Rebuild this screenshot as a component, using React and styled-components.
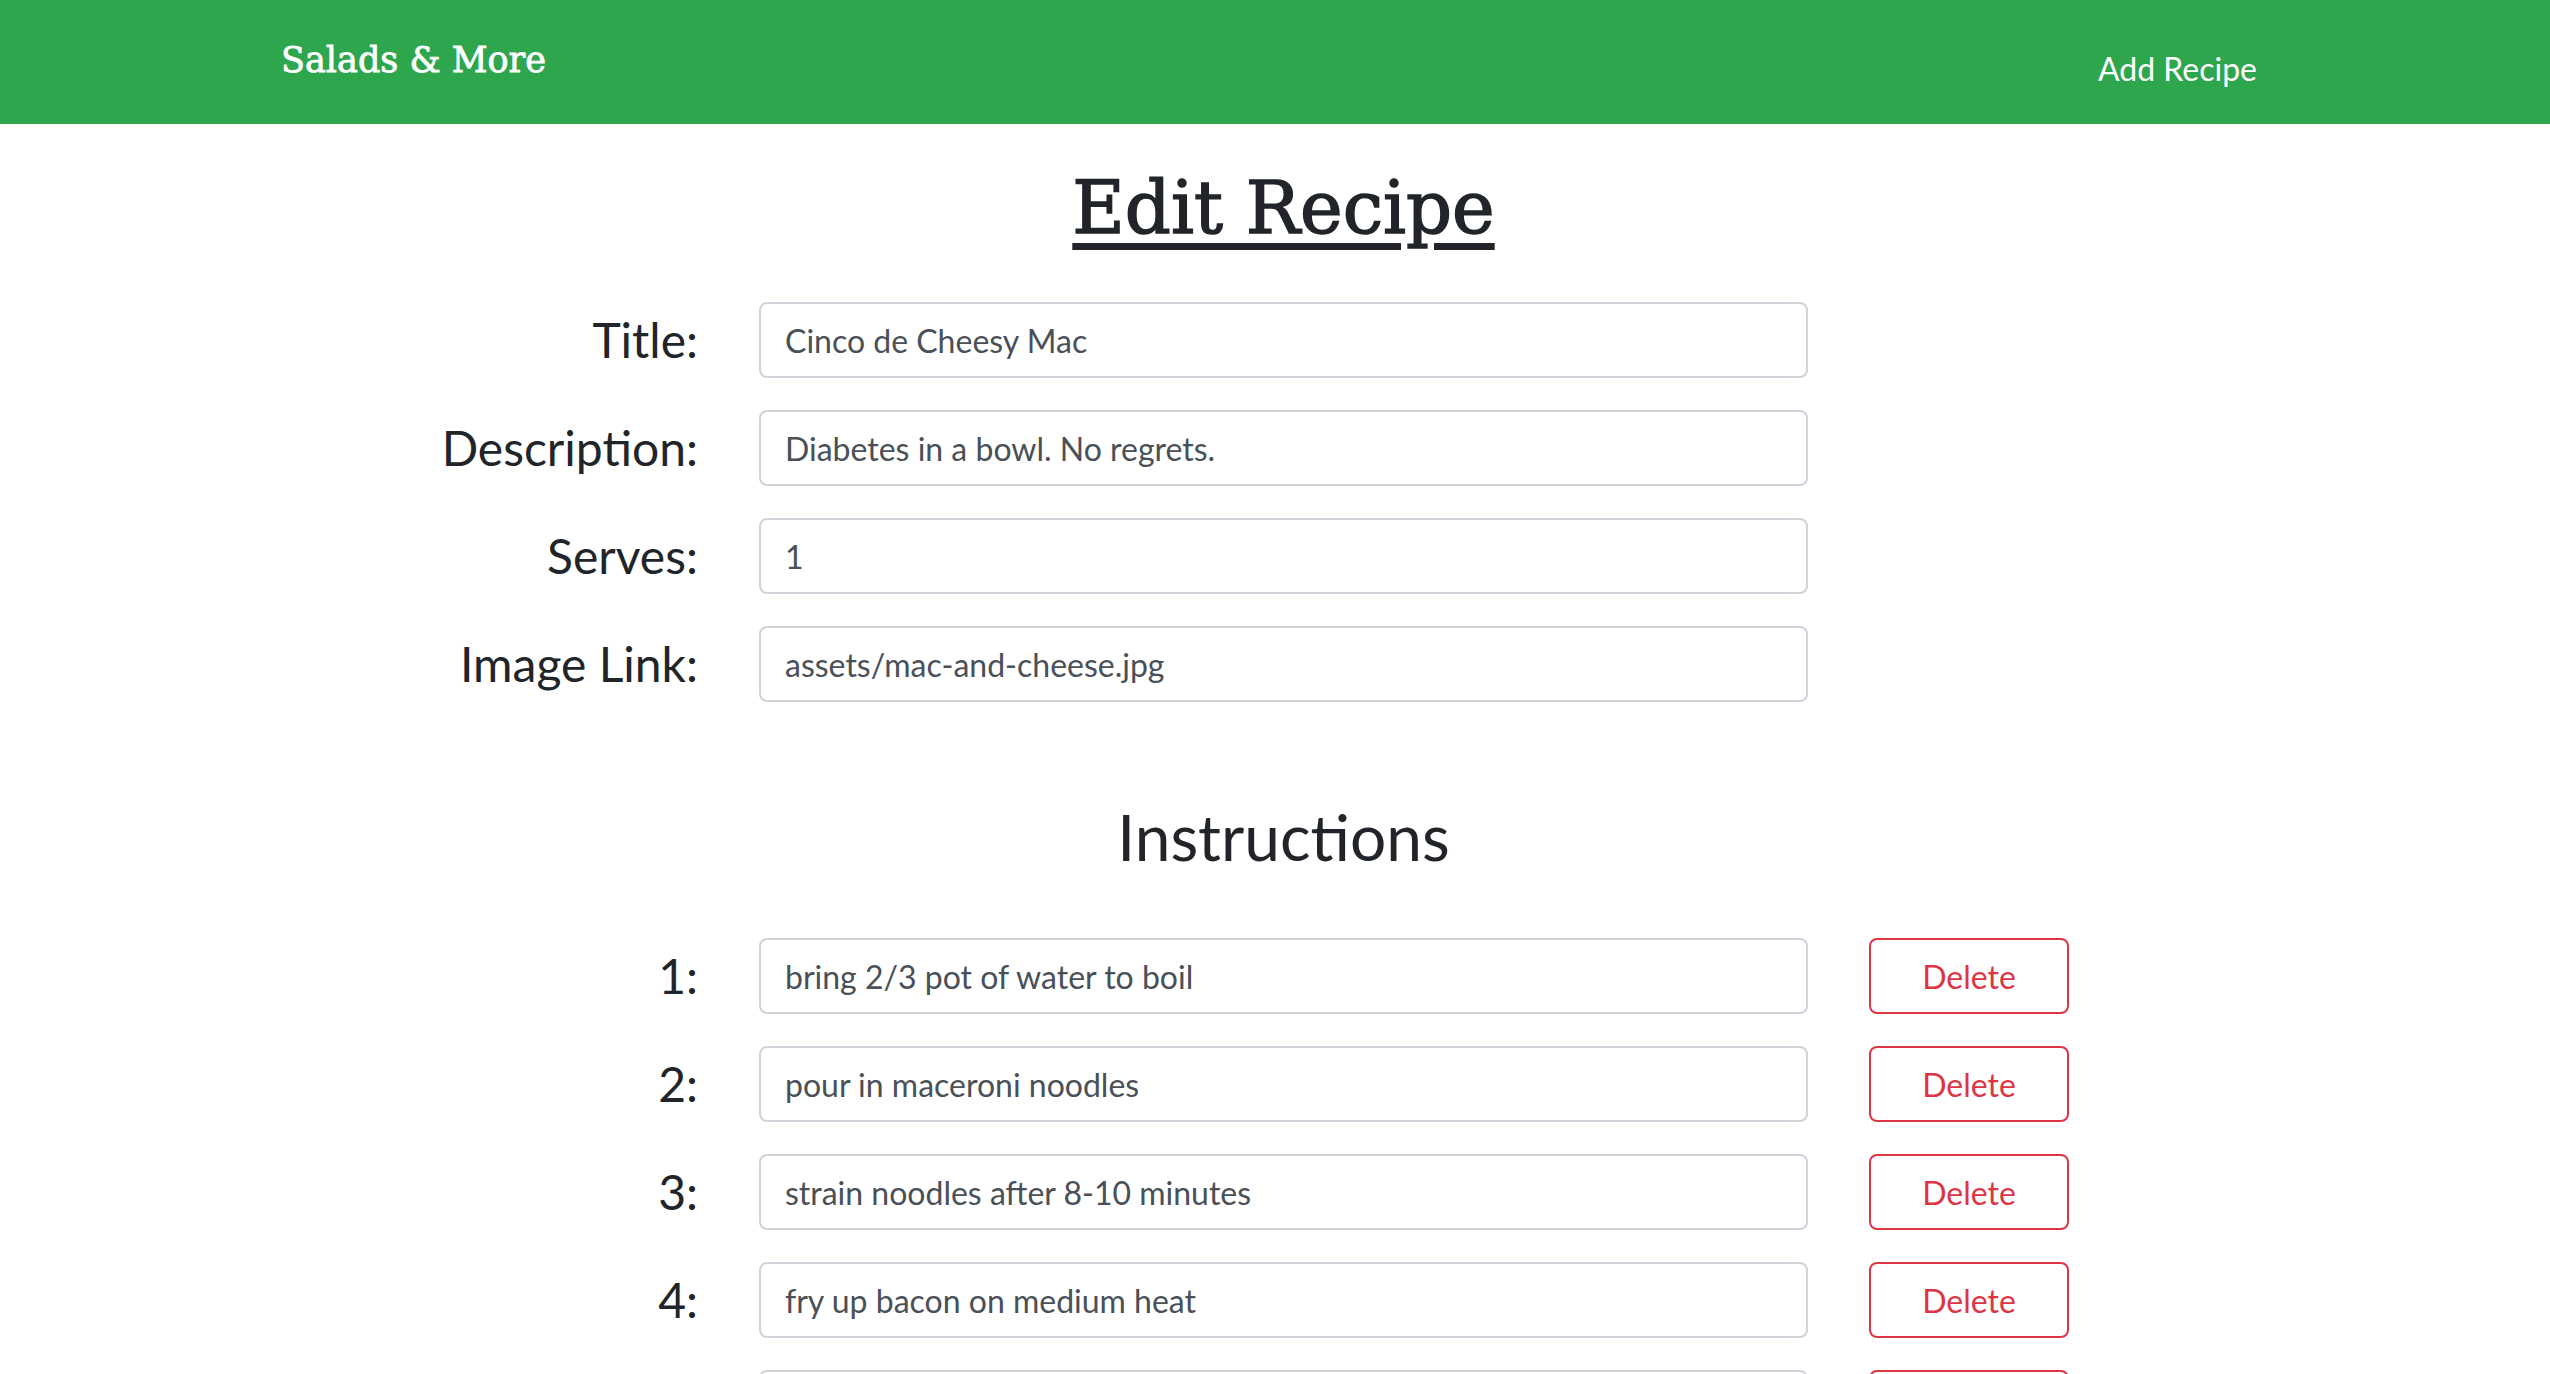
import React from "react";
import styled, { createGlobalStyle } from "styled-components";

const GlobalStyle = createGlobalStyle`
  html, body {
    margin: 0;
    padding: 0;
    background: #ffffff;
  }
  body {
    font-family: Lato, "Noto Sans", "Liberation Sans", sans-serif;
    color: #212529;
  }
  * { box-sizing: border-box; }
`;

const NavBar = styled.nav`
  height: 124px;
  background: #2ea64d;
  display: flex;
  align-items: center;
  justify-content: space-between;
  padding: 0 293px 0 281px;
`;

const Brand = styled.a`
  font-family: "DejaVu Serif", "Liberation Serif", serif;
  font-weight: normal;
  font-size: 35px;
  -webkit-text-stroke: 0.8px #ffffff;
  color: #ffffff;
  text-decoration: none;
  margin-top: -4px;
`;

const NavLink = styled.a`
  font-family: Lato, sans-serif;
  font-size: 32px;
  color: #ffffff;
  text-decoration: none;
  margin-top: 12px;
`;

const Main = styled.main`
  display: flex;
  flex-direction: column;
`;

const Grid = styled.div`
  display: grid;
  grid-template-columns: 698px 1049px 200px;
  column-gap: 61px;
  row-gap: 32px;
  align-items: center;
`;

const HeadingRow = styled.div`
  display: grid;
  grid-template-columns: 698px 1049px 200px;
  column-gap: 61px;
  margin: ${(p) => p.$margin};
`;

const PageTitle = styled.h1`
  grid-column: 2;
  justify-self: center;
  margin: 0;
  font-family: "DejaVu Serif", "Liberation Serif", serif;
  font-weight: normal;
  font-size: 72px;
  line-height: 96px;
  color: #212529;
  -webkit-text-stroke: 1.5px #212529;
  white-space: nowrap;
  text-decoration: underline;
  text-decoration-thickness: 7px;
  text-underline-offset: 10px;
`;

const SectionTitle = styled.h2`
  grid-column: 2;
  justify-self: center;
  margin: 0;
  font-family: Lato, sans-serif;
  font-weight: normal;
  font-size: 64px;
  line-height: 96px;
  color: #212529;
  white-space: nowrap;
`;

const Label = styled.label`
  grid-column: 1;
  text-align: right;
  font-size: 48px;
  line-height: 1.2;
  color: #212529;
`;

const Input = styled.input`
  grid-column: 2;
  width: 100%;
  height: 76px;
  padding: 0 24px;
  border: 2px solid #ced4da;
  border-radius: 8px;
  font-family: Lato, sans-serif;
  font-size: 32px;
  color: #495057;
  background: #ffffff;
  outline: none;
`;

const DeleteButton = styled.button`
  grid-column: 3;
  width: 200px;
  height: 76px;
  border: 2px solid #dc3545;
  border-radius: 8px;
  background: #ffffff;
  color: #dc3545;
  font-family: Lato, sans-serif;
  font-size: 32px;
  cursor: pointer;
`;

const fields = [
  { label: "Title:", value: "Cinco de Cheesy Mac" },
  { label: "Description:", value: "Diabetes in a bowl. No regrets." },
  { label: "Serves:", value: "1" },
  { label: "Image Link:", value: "assets/mac-and-cheese.jpg" },
];

const instructions = [
  "bring 2/3 pot of water to boil",
  "pour in maceroni noodles",
  "strain noodles after 8-10 minutes",
  "fry up bacon on medium heat",
  "mix in cheese, bacon and salsa",
];

export default function App() {
  return (
    <>
      <GlobalStyle />
      <NavBar>
        <Brand href="#">Salads &amp; More</Brand>
        <NavLink href="#">Add Recipe</NavLink>
      </NavBar>
      <Main>
        <HeadingRow $margin="36px 0 46px">
          <PageTitle>Edit Recipe</PageTitle>
        </HeadingRow>
        <Grid>
          {fields.map((f) => (
            <React.Fragment key={f.label}>
              <Label>{f.label}</Label>
              <Input defaultValue={f.value} />
            </React.Fragment>
          ))}
        </Grid>
        <HeadingRow $margin="87px 0 53px">
          <SectionTitle>Instructions</SectionTitle>
        </HeadingRow>
        <Grid>
          {instructions.map((s, i) => (
            <React.Fragment key={i}>
              <Label>{i + 1}:</Label>
              <Input defaultValue={s} />
              <DeleteButton>Delete</DeleteButton>
            </React.Fragment>
          ))}
        </Grid>
      </Main>
    </>
  );
}
